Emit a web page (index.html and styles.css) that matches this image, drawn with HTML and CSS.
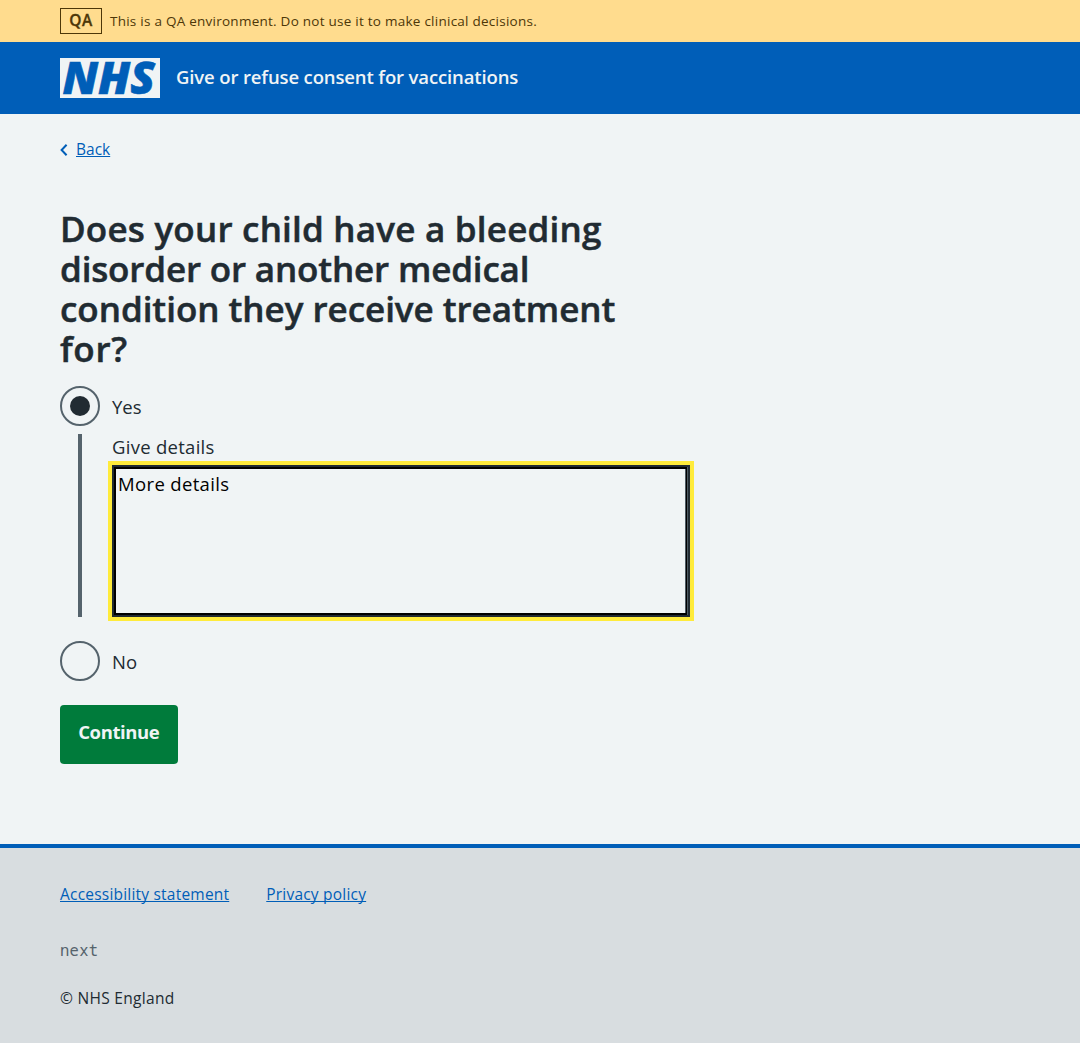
FILE: index.html
```html
<!DOCTYPE html>
<html lang="en">
<head>
<meta charset="utf-8">
<title>Give or refuse consent for vaccinations</title>
<link rel="stylesheet" href="styles.css">
</head>
<body>
<div class="environment">
  <strong class="environment-tag">QA</strong>
  <span class="environment-text">This is a QA environment. Do not use it to make clinical decisions.</span>
</div>
<header class="header">
  <svg class="logo" width="100" height="40" viewBox="0 0 100 40" role="img" aria-label="NHS">
    <rect width="100" height="40" fill="#f0f4f5"/>
    <text class="logo-text" x="2.5" y="36" textLength="92.5" lengthAdjust="spacingAndGlyphs">NHS</text>
  </svg>
  <span class="service">Give or refuse consent for vaccinations</span>
</header>
<main class="main">
  <nav class="back">
    <svg width="8" height="14" viewBox="0 0 8 14"><path d="M6.6 1.8 1.6 7l5 5.2" fill="none" stroke="#005eb8" stroke-width="2"/></svg>
    <a class="link" href="#">Back</a>
  </nav>
  <form class="form">
    <h1 class="heading"><span class="line line-first">Does your child have a bleeding</span> <span class="line line-second">disorder or another medical</span> <span class="line">condition they receive treatment</span> <span class="line line-last">for?</span></h1>
    <label class="radio"><span class="circle circle-on"></span><span>Yes</span></label>
    <div class="conditional">
      <label class="details-label" for="details">Give details</label>
      <div class="details-frame"><textarea class="details" id="details">More details</textarea></div>
    </div>
    <label class="radio"><span class="circle"></span><span>No</span></label>
    <button class="button" type="button">Continue</button>
  </form>
</main>
<footer class="footer">
  <div class="footer-links">
    <a class="link" href="#">Accessibility statement</a>
    <a class="link" href="#">Privacy policy</a>
  </div>
  <p class="version">next</p>
  <p class="copyright">© NHS England</p>
</footer>
</body>
</html>
```
FILE: styles.css
```css
* { box-sizing: border-box; }
body {
  margin: 0;
  min-height: 1043px;
  display: flex;
  flex-direction: column;
  background: #f0f4f5;
  color: #212b32;
  font-family: "Open Sans", "Noto Sans", sans-serif;
  font-size: 18.5px;
}
.environment {
  display: flex;
  align-items: center;
  gap: 8px;
  height: 42px;
  padding: 0 60px;
  background: #ffdc8e;
  color: #4d3708;
}
.environment-tag {
  width: 42px;
  height: 26px;
  border: 1px solid #4d3708;
  text-align: center;
  font-size: 15.5px;
  font-weight: 600;
  -webkit-text-stroke: 0.3px;
  letter-spacing: 0.5px;
  line-height: 23px;
}
.environment-text { font-size: 13.5px; line-height: 20px; letter-spacing: 0.25px; }
.header {
  display: flex;
  gap: 16px;
  height: 72px;
  padding: 16px 60px;
  background: #005eb8;
  color: #f0f4f5;
}
.logo { display: block; overflow: visible; }
.logo-text {
  fill: #005eb8;
  stroke: #005eb8;
  stroke-width: 0.6px;
  font: italic 800 44.5px "Open Sans", sans-serif;
}
.service { font-weight: 600; line-height: 38px; letter-spacing: -0.13px; }
.main { height: 730px; padding: 24px 60px 0; }
.back { display: flex; align-items: center; gap: 8px; height: 24px; font-size: 15.5px; line-height: 24px; }
.back .link { height: 26px; }
.link { color: #005eb8; text-decoration: underline; text-decoration-thickness: 1px; text-underline-offset: 1px; text-decoration-skip-ink: none; }
.form { width: 634px; padding-top: 47px; }
.heading {
  margin: 0 0 17px;
  font-size: 35px;
  font-weight: 600;
  -webkit-text-stroke: 0.5px;
  line-height: 40px;
  white-space: nowrap;
  letter-spacing: -0.03px;
}
.line { display: block; }
.line-first { letter-spacing: 0.22px; }
.line-second { letter-spacing: -0.16px; }
.line-last { letter-spacing: 0.7px; }
.radio { display: flex; align-items: center; gap: 12px; height: 40px; line-height: 28px; }
.radio > :last-child { padding-top: 2px; }
.circle {
  width: 40px;
  height: 40px;
  border: 2px solid #55636c;
  border-radius: 50%;
  display: grid;
  place-items: center;
}
.circle-on::before { content: ""; width: 20px; height: 20px; border-radius: 50%; background: #212b32; }
.conditional {
  margin: 8px 0 24px 18px;
  height: 183px;
  border-left: 4px solid #55636c;
  padding-left: 30px;
}
.details-label { display: block; height: 31px; line-height: 25px; letter-spacing: 0.28px; }
.details-frame {
  width: 578px;
  height: 152px;
  border: 2px solid #212b32;
  padding-right: 1px;
  background: #4c5a62;
  outline: 4px solid #ffeb3b;
}
.details {
  display: block;
  width: 100%;
  height: 100%;
  margin: 0;
  padding: 1px 2px;
  border: solid #000;
  border-width: 2px 1px 2px 2px;
  border-radius: 0;
  box-shadow: inset -1px 0 #4c5a62;
  background: #f0f4f5;
  color: #000;
  font: inherit;
  line-height: 28px;
  letter-spacing: 0.35px;
  resize: none;
  outline: 0;
}
.button {
  display: block;
  width: 117.5px;
  height: 59px;
  margin-top: 24px;
  padding: 0 0 6px;
  border: 0;
  border-radius: 4px;
  background: #007b3b;
  color: #f0f4f5;
  font: inherit;
  font-weight: 700;
  letter-spacing: -0.4px;
}
.footer {
  flex: 1;
  padding: 34px 60px 0;
  border-top: 4px solid #005eb8;
  background: #d8dde0;
  font-size: 15.5px;
  line-height: 24px;
  letter-spacing: 0.21px;
}
.footer-links { display: flex; gap: 37px; }
.version { margin: 32px 0 24px; color: #55636c; font-family: "Noto Sans Mono", "DejaVu Sans Mono", monospace; letter-spacing: 0.3px; }
.copyright { margin: 0; letter-spacing: 0.3px; }
```
